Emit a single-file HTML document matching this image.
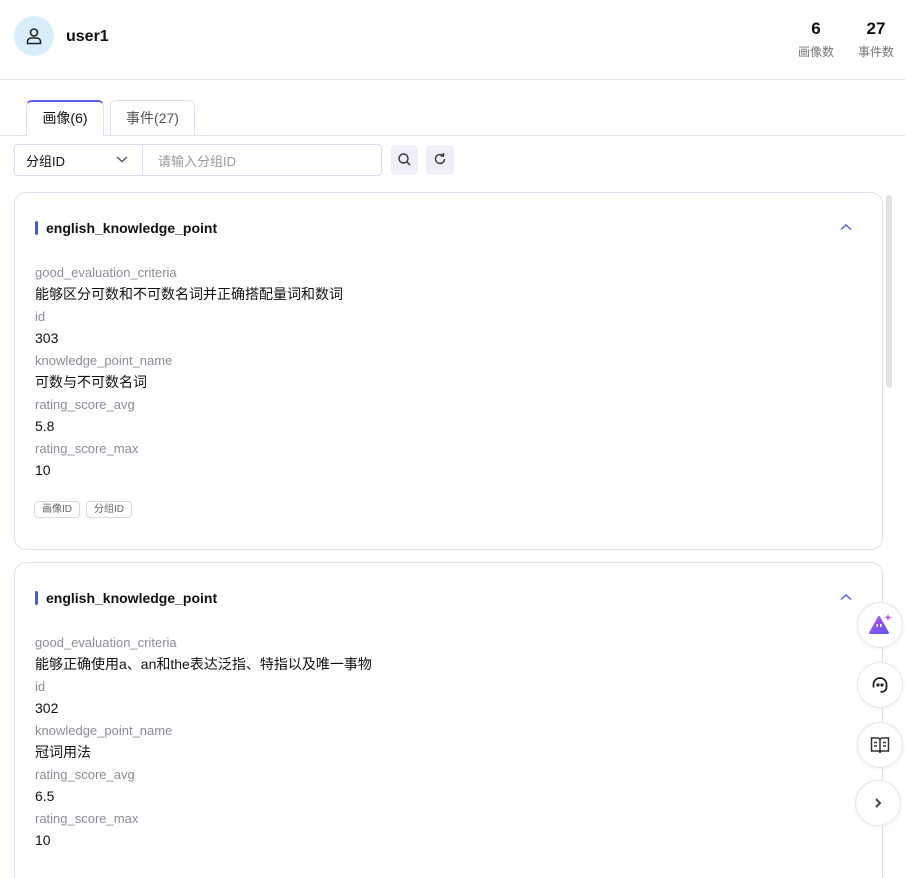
<!DOCTYPE html>
<html style="overflow:hidden;width:905px;height:878px"><head><meta charset="utf-8"><style>
*{box-sizing:border-box;margin:0;padding:0}
body{width:905px;height:878px;overflow:hidden;background:#fff;font-family:"Liberation Sans","Noto Sans CJK SC",sans-serif;color:#111;position:relative}
.a{position:absolute}
.lbl{position:absolute;left:35px;font-size:13px;color:#8a8d99;line-height:16px}
.val{position:absolute;left:35px;font-size:14px;color:#111;line-height:18px}
.card{position:absolute;left:14px;width:869px;border:1px solid #e0e0ef;border-radius:12px;background:#fff}
.title{position:absolute;left:46px;font-size:14px;font-weight:bold;line-height:18px}
.bar{position:absolute;left:35px;width:3px;height:14px;background:#3b5bf5;border-radius:2px}
.fab{position:absolute;width:46px;height:46px;border-radius:50%;background:#fff;border:1px solid #e6e6ee;box-shadow:0 1px 4px rgba(0,0,0,.06);display:flex;align-items:center;justify-content:center}
.tag{position:absolute;top:501px;height:17px;border:1px solid #d8d9e0;border-radius:4px;font-size:10px;color:#666;line-height:15px;padding:0 7px}
</style></head><body>
<div class="a" style="left:14px;top:16px;width:40px;height:40px;border-radius:50%;background:#d9eefb"></div>
<svg class="a" style="left:24px;top:26px" width="20" height="20" viewBox="0 0 20 20" fill="none" stroke="#222" stroke-width="1.6"><circle cx="10" cy="6.5" r="3.5"/><path d="M3.5 17.5v-2a3.5 3.5 0 0 1 3.5-3.5h6a3.5 3.5 0 0 1 3.5 3.5v2z"/></svg>
<div class="a" style="left:66px;top:28px;font-size:16px;font-weight:bold">user1</div>
<div class="a" style="left:796px;top:19px;width:40px;text-align:center;font-size:17px;font-weight:bold">6</div>
<div class="a" style="left:794px;top:43px;width:44px;text-align:center;font-size:12px;color:#777">画像数</div>
<div class="a" style="left:856px;top:19px;width:40px;text-align:center;font-size:17px;font-weight:bold">27</div>
<div class="a" style="left:854px;top:43px;width:44px;text-align:center;font-size:12px;color:#777">事件数</div>
<div class="a" style="left:0;top:79px;width:905px;height:1px;background:#e3e3ee"></div>

<div class="a" style="left:0;top:135px;width:905px;height:1px;background:#e3e3ee"></div>
<div class="a" style="left:26px;top:100px;width:78px;height:36px;border:1px solid #dfe0f0;border-top:2px solid #5b5bf0;border-bottom:none;border-radius:6px 6px 0 0;background:#fff;font-size:14px;text-align:center;line-height:33px">画像(6)</div>
<div class="a" style="left:110px;top:100px;width:85px;height:35px;border:1px solid #dfe0f0;border-bottom:none;border-radius:6px 6px 0 0;font-size:14px;color:#555;text-align:center;line-height:34px">事件(27)</div>

<div class="a" style="left:14px;top:144px;width:368px;height:32px;border:1px solid #dcdcec;border-radius:4px"></div>
<div class="a" style="left:142px;top:144px;width:1px;height:32px;background:#dcdcec"></div>
<div class="a" style="left:26px;top:151px;font-size:13px">分组ID</div>
<svg class="a" style="left:115px;top:154px" width="14" height="10" viewBox="0 0 14 10" fill="none" stroke="#555" stroke-width="1.4"><path d="M2 3l5 4.5L12 3"/></svg>
<div class="a" style="left:158px;top:151px;font-size:13px;color:#999">请输入分组ID</div>
<div class="a" style="left:391px;top:145px;width:27px;height:30px;background:#eeeff8;border-radius:4px"></div>
<svg class="a" style="left:397px;top:152px" width="15" height="15" viewBox="0 0 15 15" fill="none" stroke="#333" stroke-width="1.4"><circle cx="6.5" cy="6.5" r="4.5"/><path d="M10 10l3 3"/></svg>
<div class="a" style="left:426px;top:145px;width:28px;height:30px;background:#eeeff8;border-radius:4px"></div>
<svg class="a" style="left:433px;top:152px" width="14" height="14" viewBox="0 0 14 14" fill="none" stroke="#333" stroke-width="1.4"><path d="M11.5 7A4.5 4.5 0 1 1 10 3.6"/><path d="M10.5 1v3h-3"/></svg>

<div class="card" style="top:192px;height:358px"></div>
<div class="a" style="left:886px;top:195px;width:6px;height:193px;background:#e2e3ea;border-radius:3px"></div>
<div class="bar" style="top:221px"></div><div class="title" style="top:219px">english_knowledge_point</div>
<svg class="a" style="left:839px;top:222px" width="14" height="10" viewBox="0 0 14 10" fill="none" stroke="#5b5bf0" stroke-width="1.5"><path d="M2 7.5L7 3l5 4.5"/></svg>
<div class="lbl" style="top:265px">good_evaluation_criteria</div>
<div class="val" style="top:285px">能够区分可数和不可数名词并正确搭配量词和数词</div>
<div class="lbl" style="top:309px">id</div>
<div class="val" style="top:329px">303</div>
<div class="lbl" style="top:353px">knowledge_point_name</div>
<div class="val" style="top:373px">可数与不可数名词</div>
<div class="lbl" style="top:397px">rating_score_avg</div>
<div class="val" style="top:417px">5.8</div>
<div class="lbl" style="top:441px">rating_score_max</div>
<div class="val" style="top:461px">10</div>
<div class="tag" style="left:34px">画像ID</div>
<div class="tag" style="left:86px">分组ID</div>

<div class="card" style="top:562px;height:316px;border-bottom:none;border-radius:12px 12px 0 0"></div>
<div class="bar" style="top:591px"></div><div class="title" style="top:589px">english_knowledge_point</div>
<svg class="a" style="left:839px;top:592px" width="14" height="10" viewBox="0 0 14 10" fill="none" stroke="#5b5bf0" stroke-width="1.5"><path d="M2 7.5L7 3l5 4.5"/></svg>
<div class="lbl" style="top:635px">good_evaluation_criteria</div>
<div class="val" style="top:655px">能够正确使用a、an和the表达泛指、特指以及唯一事物</div>
<div class="lbl" style="top:679px">id</div>
<div class="val" style="top:699px">302</div>
<div class="lbl" style="top:723px">knowledge_point_name</div>
<div class="val" style="top:743px">冠词用法</div>
<div class="lbl" style="top:767px">rating_score_avg</div>
<div class="val" style="top:787px">6.5</div>
<div class="lbl" style="top:811px">rating_score_max</div>
<div class="val" style="top:831px">10</div>

<div class="fab" style="left:857px;top:602px"><svg width="26" height="24" viewBox="0 0 26 24"><defs><linearGradient id="g" x1="0" y1="0" x2="1" y2="1"><stop offset="0" stop-color="#c04ef0"/><stop offset="1" stop-color="#5a5af5"/></linearGradient></defs><path d="M12 4L3 20h18z" fill="url(#g)" stroke="url(#g)" stroke-linejoin="round" stroke-width="2"/><rect x="9.5" y="11" width="1.5" height="3" fill="#fff"/><rect x="13" y="11" width="1.5" height="3" fill="#fff"/><path d="M21 1l1 2.5 2.5 1-2.5 1-1 2.5-1-2.5-2.5-1 2.5-1z" fill="#c04ef0"/></svg></div>
<div class="fab" style="left:857px;top:662px"><svg width="20" height="20" viewBox="0 0 20 20" fill="none" stroke="#222" stroke-width="1.8"><path d="M3.5 12.5V9.5a6.5 6.5 0 0 1 13 0v3"/><path d="M16.5 12.5a4.5 4.5 0 0 1-6 4"/><circle cx="8" cy="10" r=".7" fill="#222"/><circle cx="12" cy="10" r=".7" fill="#222"/></svg></div>
<div class="fab" style="left:857px;top:722px"><svg width="20" height="18" viewBox="0 0 20 18" fill="none" stroke="#333" stroke-width="1.5"><path d="M1.5 2h7l1.5 1.5L11.5 2h7v13h-7l-1.5 1.5L8.5 15h-7z"/><path d="M10 3.5v13M4 6.5h3M4 10h3M13 6.5h3M13 10h3"/></svg></div>
<div class="fab" style="left:855px;top:780px"><svg width="12" height="12" viewBox="0 0 12 12" fill="none" stroke="#444" stroke-width="2"><path d="M4 2l4 4-4 4"/></svg></div>
</body></html>
